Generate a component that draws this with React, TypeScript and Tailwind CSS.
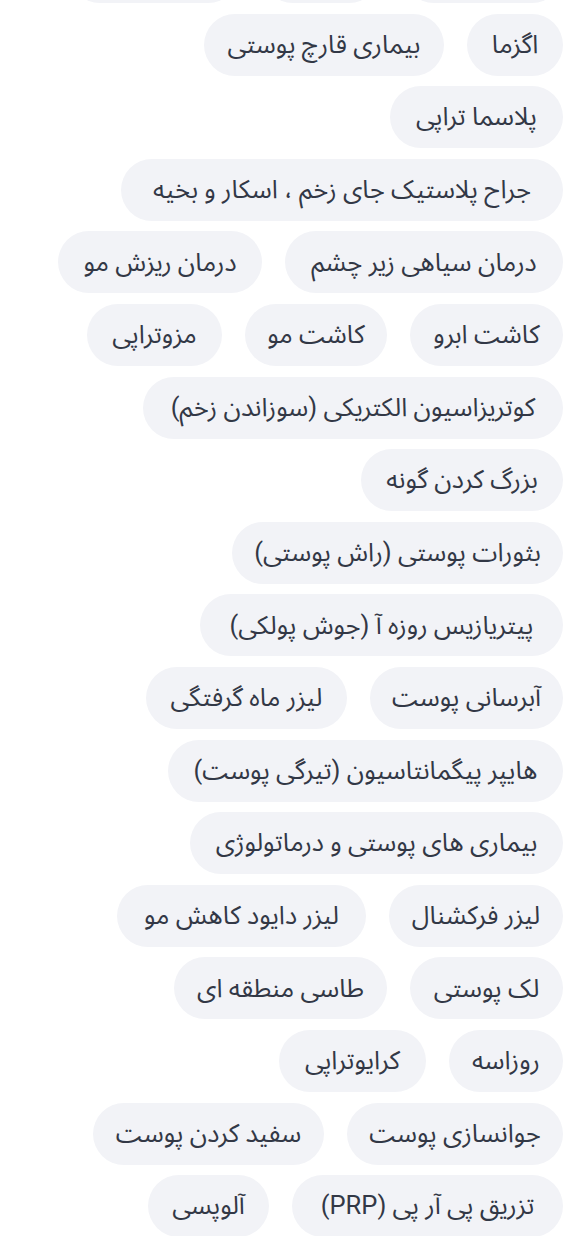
type Chip = { label: string; w: string };

// rows as they wrap on the real page (right to left)
const rows: Chip[][] = [
  [
    { label: 'لیزر موهای زائد', w: 'w-[160px]' },
    { label: 'بوتاکس', w: 'w-[118px]' },
    { label: 'فیلر لب و گونه', w: 'w-[170px]' },
  ],
  [
    { label: 'اگزما', w: 'w-[96px]' },
    { label: 'بیماری قارچ پوستی', w: 'w-[240px]' },
  ],
  [{ label: 'پلاسما تراپی', w: 'w-[173px]' }],
  [{ label: 'جراح پلاستیک جای زخم ، اسکار و بخیه', w: 'w-[442px]' }],
  [
    { label: 'درمان سیاهی زیر چشم', w: 'w-[278px]' },
    { label: 'درمان ریزش مو', w: 'w-[204px]' },
  ],
  [
    { label: 'کاشت ابرو', w: 'w-[153px]' },
    { label: 'کاشت مو', w: 'w-[142px]' },
    { label: 'مزوتراپی', w: 'w-[135px]' },
  ],
  [{ label: 'کوتریزاسیون الکتریکی (سوزاندن زخم)', w: 'w-[420px]' }],
  [{ label: 'بزرگ کردن گونه', w: 'w-[202px]' }],
  [{ label: 'بثورات پوستی (راش پوستی)', w: 'w-[331px]' }],
  [{ label: 'پیتریازیس روزه آ (جوش پولکی)', w: 'w-[363px]' }],
  [
    { label: 'آبرسانی پوست', w: 'w-[193px]' },
    { label: 'لیزر ماه گرفتگی', w: 'w-[201px]' },
  ],
  [{ label: 'هایپر پیگمانتاسیون (تیرگی پوست)', w: 'w-[395px]' }],
  [{ label: 'بیماری های پوستی و درماتولوژی', w: 'w-[373px]' }],
  [
    { label: 'لیزر فرکشنال', w: 'w-[174px]' },
    { label: 'لیزر دایود کاهش مو', w: 'w-[249px]' },
  ],
  [
    { label: 'لک پوستی', w: 'w-[153px]' },
    { label: 'طاسی منطقه ای', w: 'w-[213px]' },
  ],
  [
    { label: 'روزاسه', w: 'w-[114px]' },
    { label: 'کرایوتراپی', w: 'w-[147px]' },
  ],
  [
    { label: 'جوانسازی پوست', w: 'w-[216px]' },
    { label: 'سفید کردن پوست', w: 'w-[231px]' },
  ],
  [
    { label: 'تزریق پی آر پی (PRP)', w: 'w-[271px]' },
    { label: 'آلوپسی', w: 'w-[121px]' },
  ],
];

function Tag({ label, w }: Chip) {
  return (
    <span
      className={`${w} inline-flex h-[62px] shrink-0 items-center justify-center whitespace-nowrap rounded-full bg-[#f2f3f7] text-[25.5px] leading-none text-[#323846]`}
    >
      {label}
    </span>
  );
}

export default function App() {
  return (
    <div
      dir="rtl"
      className="h-[1236px] overflow-hidden bg-white"
      style={{ fontFamily: 'Roboto, "Noto Sans Arabic", "Noto Sans", "DejaVu Sans", sans-serif' }}
    >
      <div className="mt-[-59px] flex flex-col gap-[10.6px] pr-[22px]">
        {rows.map((row, i) => (
          <div key={i} className="flex gap-[23px]">
            {row.map((c) => (
              <Tag key={c.label} {...c} />
            ))}
          </div>
        ))}
      </div>
    </div>
  );
}
